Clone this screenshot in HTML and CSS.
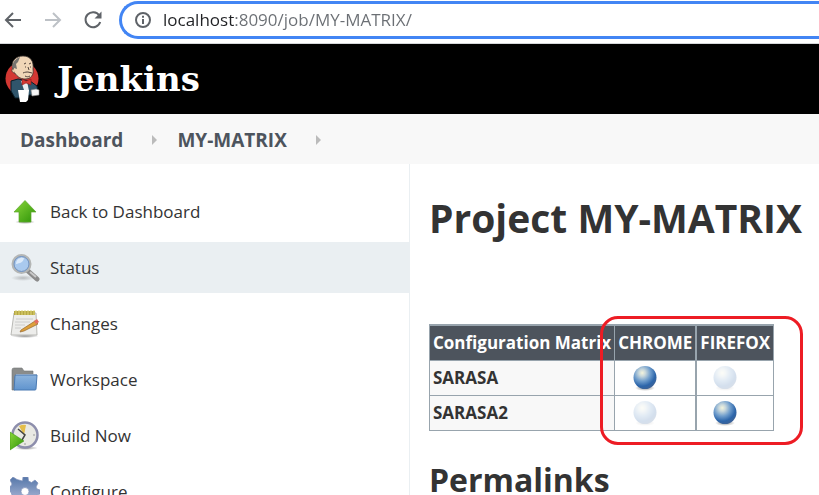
FILE: index.html
```html
<!DOCTYPE html>
<html lang="en">
<head>
<meta charset="utf-8">
<title>MY-MATRIX [Jenkins]</title>
<link rel="stylesheet" href="styles.css">
</head>
<body>
<svg class="defs" aria-hidden="true">
  <defs>
    <radialGradient id="blue" cx=".38" cy=".3" r=".72">
      <stop offset="0" stop-color="#f4f4dc"/><stop offset=".2" stop-color="#c9d8dc"/><stop offset=".5" stop-color="#6f9dcc"/><stop offset=".8" stop-color="#2c65aa"/><stop offset="1" stop-color="#3c6297"/>
    </radialGradient>
    <radialGradient id="shade"><stop offset="0" stop-color="#444" stop-opacity=".6"/><stop offset="1" stop-color="#444" stop-opacity="0"/></radialGradient>
    <linearGradient id="green" x2="1" y2="1"><stop stop-color="#8bd63a"/><stop offset="1" stop-color="#2d9408"/></linearGradient>
    <linearGradient id="folder" x2="0" y2="1"><stop stop-color="#8db4dd"/><stop offset="1" stop-color="#6094ce"/></linearGradient>
    <linearGradient id="gear" x2="0" y2="1"><stop stop-color="#5577a9"/><stop offset="1" stop-color="#bcc3df"/></linearGradient>
    <symbol id="ball" viewBox="0 0 26 26">
      <ellipse cx="13" cy="23" rx="10" ry="3" fill="url(#shade)"/>
      <circle cx="13" cy="12.5" r="11.5" fill="url(#blue)"/>
    </symbol>
  </defs>
</svg>

<div class="browser">
  <button class="nav" aria-label="Back"><svg viewBox="0 0 20 20"><path d="M18 10H3M10 3l-7 7 7 7"/></svg></button>
  <button class="nav nav-off" aria-label="Forward"><svg viewBox="0 0 20 20"><path d="M2 10h15M10 3l7 7-7 7"/></svg></button>
  <button class="nav" aria-label="Reload"><svg viewBox="0 0 20 20"><path d="M16.300 5.500A7.500 7.500 0 1 0 17.200 12"/><path d="M18.500 1.500v7h-7z" class="solid"/></svg></button>
  <div class="address">
    <svg class="info" viewBox="0 0 18 18"><circle cx="9" cy="9" r="7"/><path d="M9 8v5M9 4.700v2"/></svg>
    <input class="url" type="text" aria-label="Address" value="localhost:8090/job/MY-MATRIX/">
  </div>
</div>

<header class="header">
  <a class="brand" href="#">
    <svg class="butler" viewBox="0 0 36 48" aria-hidden="true">
      <circle cx="17" cy="23.500" r="16.500" fill="#d33833"/>
      <path d="M6 26l7-2 12 2 7 5 1 6-7 3H24l-1 3H10L6 36z" fill="#30556b" stroke="#081c26"/>
      <path d="M16 26h6l2 10-4 2z" fill="#e8edf0"/>
      <path d="M8 15C5 6 11 1 18 1c8 0 11 6 10 13 1 6-2 10-8 10-5 0-9-3-12-9z" fill="#f0d6b7" stroke="#3b3430" stroke-width=".8"/>
      <path d="M8 15c-2-5 1-11 7-13l-2 5-2 2 1 5-3-1z" fill="#77746f"/>
      <path d="M9 14c-3-1-3 4 1 4" fill="#e8c7a5" stroke="#4b3d36" stroke-width=".8"/>
      <path d="M19 9l2-1m3 1l2-1M20 12h1m4 0h1m-3 0l1 3M18 18c2-1 4-1 5-1l4 1M20 21c2 1 3 1 5 0" fill="none" stroke="#51433b"/>
      <path d="M17 24l4 2 5-2v6l-5-2-4 2z" fill="#d33833" stroke="#8e1919" stroke-width=".6"/>
      <path d="M13 35h11l-1 10-2 2h-6z" fill="#fff"/>
      <path d="M26 35l5-1 3 1v5l-7 1z" fill="#f7f7f7" stroke="#888" stroke-width=".6"/>
    </svg>
    <span class="brand-name">Jenkins</span>
  </a>
</header>

<nav class="crumbs" aria-label="Breadcrumb">
  <a href="#">Dashboard</a><span class="arrow"></span>
  <a href="#">MY-MATRIX</a><span class="arrow"></span>
</nav>

<div class="page">
  <nav class="side" aria-label="Tasks">
    <a class="task" href="#">
      <svg viewBox="0 0 30 30"><ellipse cx="15" cy="25" rx="10" ry="2" fill="url(#shade)"/><path d="M15 3.500L26 15h-5v10H9V15H4z" fill="url(#green)" stroke="#5ca82c" stroke-width=".7"/></svg>Back to Dashboard</a>
    <a class="task task-on" href="#">
      <svg viewBox="0 0 30 30"><ellipse cx="13" cy="25" rx="12" ry="3" fill="url(#shade)" opacity=".5"/><path d="M18 18l9 8" stroke="#8b8b8b" stroke-width="5" stroke-linecap="round"/><path d="M20 19l6 5" stroke="#c9c9c9" stroke-width="2"/><circle cx="11.500" cy="11" r="8.500" fill="#a9c9ee" stroke="#b4b6b5" stroke-width="3"/><circle cx="11.500" cy="11" r="7.500" fill="none" stroke="#6d94c9"/><path d="M6 11a6 6 0 0 1 8-6c-1 5-4 5-8 6" fill="#dceafa"/></svg>Status</a>
    <a class="task" href="#">
      <svg viewBox="0 0 30 30"><ellipse cx="15" cy="27" rx="14" ry="2" fill="url(#shade)"/><path d="M4 4h22l1 22H1z" fill="#ededeb" stroke="#b9b9b5"/><path d="M4 2h21v4H4z" fill="#b5a744"/><path d="M6 1v5m3-5v5m3-5v5m3-5v5m3-5v5m3-5v5m3-5v5" stroke="#e0d778"/><path d="M6 10h17M5 13h15M5 16h10M5 19h6" stroke="#cccccb"/><path d="M11 21L25 12l3 3-14 7-4 1z" fill="#dda03b" stroke="#95652b" stroke-width=".7"/><path d="M24 12l3-2 2 3-3 2z" fill="#e26b62"/></svg>Changes</a>
    <a class="task" href="#">
      <svg viewBox="0 0 30 30"><path d="M2 5q0-2 2-2h8l2 3h9v6H5v13H2z" fill="#8a8c8b" stroke="#747777" stroke-width=".6"/><path d="M6 9h21v2H6z" fill="#cbd0d3"/><path d="M5 11q0-1 1-1h21l-1 14q0 1-1 1H4z" fill="url(#folder)" stroke="#4979b2"/></svg>Workspace</a>
    <a class="task" href="#">
      <svg viewBox="0 0 30 30"><ellipse cx="16" cy="27" rx="12" ry="2" fill="url(#shade)"/><circle cx="15" cy="14" r="12.500" fill="#e9e9e3" stroke="#8d8eac" stroke-width="2.500"/><path d="M14 14L9 5q4-2 7-1z" fill="#e4bd49"/><path d="M8 8l7 6-3 5" fill="none" stroke="#444" stroke-width="1.500"/><path d="M15 22v2m8-10h2" stroke="#999"/><path d="M0 11l14 9-14 9z" fill="url(#green)" stroke="#37910f" stroke-width=".5"/></svg>Build Now</a>
    <a class="task" href="#">
      <svg viewBox="0 0 30 30"><path fill-rule="evenodd" d="M13 0h5l.5 4 3 1.500L25 3l3 3-2 4 1 2 3 1v4l-4 1-1 3 2 3-4 4-4-3-3 1-1 3h-4l-1-4-3-1-4 2-3-4 2-4-1-3-3-1v-4l3-1 1-2-2-4 3-3 4 2.500L12.500 4zM15 10.500a4 4 0 1 0 0 8 4 4 0 0 0 0-8z" fill="url(#gear)" stroke="#7f91ba" stroke-width=".7"/></svg>Configure</a>
  </nav>

  <main class="main">
    <h1>Project MY-MATRIX</h1>
    <div class="matrix-box">
      <table class="matrix">
        <thead>
          <tr><th scope="col">Configuration Matrix</th><th scope="col">CHROME</th><th scope="col">FIREFOX</th></tr>
        </thead>
        <tbody>
          <tr><th scope="row">SARASA</th><td><svg class="ball" role="img" aria-label="Success"><use href="#ball"/></svg></td><td><svg class="ball ball-off" role="img" aria-label="Not run"><use href="#ball"/></svg></td></tr>
          <tr><th scope="row">SARASA2</th><td><svg class="ball ball-off" role="img" aria-label="Not run"><use href="#ball"/></svg></td><td><svg class="ball" role="img" aria-label="Success"><use href="#ball"/></svg></td></tr>
        </tbody>
      </table>
      <div class="mark"></div>
    </div>
    <h2>Permalinks</h2>
  </main>
</div>
</body>
</html>
```
FILE: styles.css
```css
* { box-sizing: border-box; }
html { height: 100%; overflow: hidden; }
body {
  display: flex;
  flex-direction: column;
  min-height: 100%;
  margin: 0;
  background: #fff;
  color: #333;
  font-family: "Open Sans", "Noto Sans", sans-serif;
  font-size: 17px;
}
a { color: inherit; text-decoration: none; }
.defs { position: absolute; width: 0; height: 0; }

/* Browser toolbar */
.browser {
  display: flex;
  align-items: center;
  gap: 20px;
  height: 44px;
  padding: 0 0 3px 3px;
  border-bottom: 1px solid #d5d7da;
}
.nav { width: 20px; height: 20px; padding: 0; border: 0; background: none; }
.nav svg { display: block; width: 20px; height: 20px; fill: none; stroke: #5f6368; stroke-width: 2; }
.nav .solid { fill: #5f6368; stroke: none; }
.nav-off svg { stroke: #bdc1c6; }
.address {
  display: flex;
  flex: 1;
  align-items: center;
  gap: 11px;
  height: 38px;
  margin-left: -4px;
  padding-left: 12px;
  border: 3px solid #4285f4;
  border-right: 0;
  border-radius: 19px 0 0 19px;
}
.info { width: 18px; height: 18px; fill: none; stroke: #5f6368; stroke-width: 2; }
.url {
  flex: 1;
  min-width: 0;
  padding: 0;
  border: 0;
  outline: 0;
  background: linear-gradient(to right, #202124 72px, #6b6f74 72px);
  background-clip: text;
  -webkit-background-clip: text;
  color: transparent;
  font: 17px/24px "Open Sans", "Noto Sans", sans-serif;
}

/* Header and breadcrumb */
.header { height: 70px; padding: 0 5px; background: #000; }
.brand { display: inline-flex; align-items: center; gap: 16px; height: 70px; }
.butler { width: 36px; height: 48px; }
.brand-name { color: #fff; font: bold 34px/44px "DejaVu Serif", serif; }
.crumbs {
  display: flex;
  align-items: center;
  height: 50px;
  padding: 2px 20px 0;
  background: #f8f8f8;
  color: #4d545d;
  font-size: 19px;
  font-weight: 700;
}
.arrow {
  margin: 0 20px 0 29px;
  border: 5px solid transparent;
  border-right: 0;
  border-left-color: #bbb;
}

/* Page body */
.page { display: grid; grid-template-columns: 410px 1fr; flex: 1; }
.side {
  display: flex;
  flex-direction: column;
  gap: 5px;
  padding-top: 22px;
  border-right: 1px solid #eaeff2;
}
.task { display: flex; align-items: center; gap: 10px; height: 51px; padding-left: 10px; }
.task svg { width: 30px; height: 30px; }
.task-on { background: #eaeff2; }
.main { padding: 25px 16px 0 19px; }
h1 { margin: 0 0 78px; font-size: 39px; line-height: 57px; white-space: nowrap; }
h2 { margin: 25px 0 0; font-size: 32px; line-height: 48px; }

/* Configuration matrix */
.matrix-box { position: relative; width: max-content; }
.matrix { border-collapse: collapse; }
.matrix th, .matrix td { height: 35px; padding: 0 3px; border: 1px solid #98a4ad; }
.matrix th { background: #f8f8f8; text-align: left; white-space: nowrap; }
.matrix thead th { border-top-width: 2px; background: #4d545d; color: #fff; }
.matrix td { padding-right: 24px; text-align: center; }
.matrix th:last-child, .matrix td:last-child { border-left-width: 2px; }
.ball { display: inline-block; width: 26px; height: 26px; vertical-align: middle; }
.ball-off { opacity: .2; }
.mark {
  position: absolute;
  inset: -8px -29px -14px 171px;
  border: 3px solid #ed1c24;
  border-radius: 18px;
}
```
